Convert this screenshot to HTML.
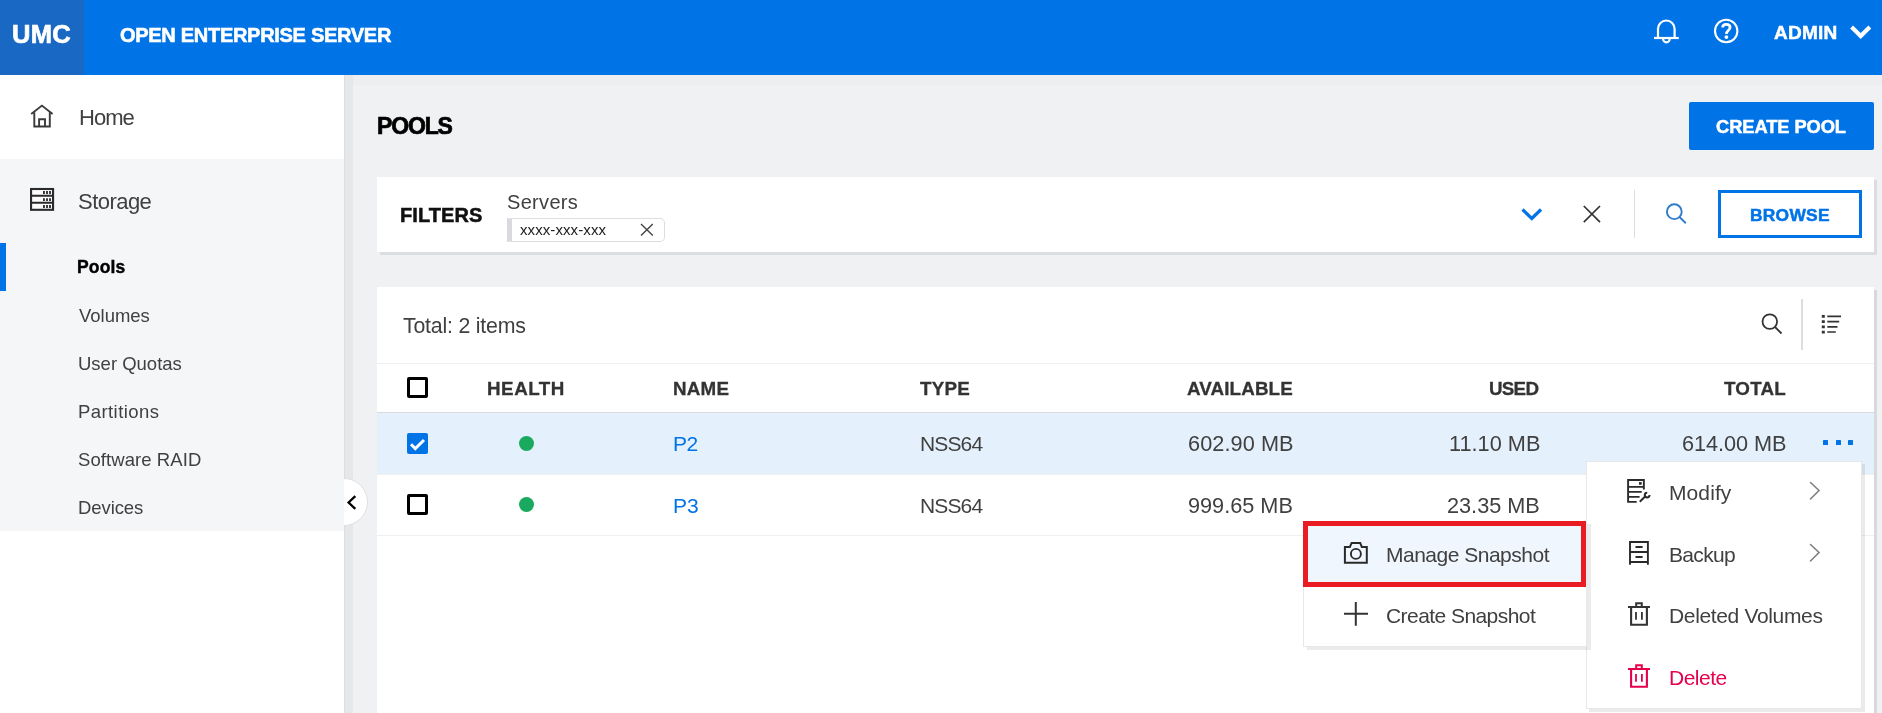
<!DOCTYPE html><html><head><meta charset="utf-8"><style>
html,body{margin:0;padding:0;width:1882px;height:713px;overflow:hidden;background:#f0f1f3;font-family:"Liberation Sans",sans-serif;}
.t{position:absolute;white-space:nowrap;line-height:1;will-change:transform;}
.r{position:absolute;box-sizing:border-box;}
svg{position:absolute;overflow:visible;}
</style></head><body>
<div class="r" style="left:344px;top:75px;width:1538px;height:638px;background:#f0f1f3"></div>
<div class="r" style="left:344px;top:75px;width:1538px;height:10px;background:#edeef0"></div>
<div class="r" style="left:344px;top:75px;width:9px;height:638px;background:#e6e7e9"></div>
<div class="r" style="left:344px;top:75px;width:1px;height:638px;background:#dcdddf"></div>
<div class="r" style="left:0px;top:0px;width:1882px;height:75px;background:#0073e7"></div>
<div class="r" style="left:0px;top:0px;width:84px;height:75px;background:#1968c4"></div>
<div class="t" style="left:12.00px;top:21.51px;font-size:25.5px;font-weight:bold;color:#fff;letter-spacing:0.295px;-webkit-text-stroke:0.7px #fff;">UMC</div>
<div class="t" style="left:119.80px;top:25.07px;font-size:20px;font-weight:bold;color:#fff;letter-spacing:-0.293px;-webkit-text-stroke:0.6px #fff;">OPEN ENTERPRISE SERVER</div>
<div class="t" style="left:1774.22px;top:22.92px;font-size:19px;font-weight:bold;color:#fff;letter-spacing:0.246px;-webkit-text-stroke:0.5px #fff;">ADMIN</div>
<svg style="left:1848px;top:24px" width="26" height="16" viewBox="0 0 26 16"><path d="M3.6 3 L12.7 12 L21.8 3" fill="none" stroke="#fff" stroke-width="4.1"/></svg>
<svg style="left:1650px;top:15px" width="32" height="32" viewBox="0 0 32 32"><path d="M8 23 V13.8 A8.2 8.2 0 0 1 24.6 13.8 V23" fill="none" stroke="#fff" stroke-width="2.2"/><path d="M4 23 H28.8" fill="none" stroke="#fff" stroke-width="2.2"/><path d="M13.1 24 A3.2 3.2 0 0 0 19.7 24" fill="none" stroke="#fff" stroke-width="2.2"/></svg>
<svg style="left:1712px;top:17px" width="28" height="28" viewBox="0 0 28 28"><circle cx="14.2" cy="14" r="11.2" fill="none" stroke="#fff" stroke-width="2.1"/><path d="M10.6 10.5 C10.6 6.3 18.1 6.3 18.1 10.5 C18.1 13.2 14.4 13.4 14.4 17" fill="none" stroke="#fff" stroke-width="2.7"/><circle cx="14.4" cy="20.1" r="1.9" fill="#fff"/></svg>
<div class="r" style="left:0px;top:75px;width:344px;height:84px;background:#fff"></div>
<div class="r" style="left:0px;top:159px;width:344px;height:372px;background:#f5f6f8"></div>
<div class="r" style="left:0px;top:531px;width:344px;height:182px;background:#fff"></div>
<div class="r" style="left:0px;top:243px;width:6px;height:48px;background:#0073e7"></div>
<div class="t" style="left:79.04px;top:106.88px;font-size:22px;color:#404040;letter-spacing:-0.979px;">Home</div>
<div class="t" style="left:77.71px;top:191.08px;font-size:22px;color:#404040;letter-spacing:-0.535px;">Storage</div>
<div class="t" style="left:77.45px;top:259.39px;font-size:17.5px;font-weight:bold;color:#000;letter-spacing:0.151px;-webkit-text-stroke:0.4px #000;">Pools</div>
<div class="t" style="left:78.51px;top:306.74px;font-size:18.5px;color:#404040;letter-spacing:-0.018px;">Volumes</div>
<div class="t" style="left:77.71px;top:354.74px;font-size:18.5px;color:#404040;letter-spacing:-0.002px;">User Quotas</div>
<div class="t" style="left:77.71px;top:402.74px;font-size:18.5px;color:#404040;letter-spacing:0.422px;">Partitions</div>
<div class="t" style="left:77.71px;top:450.74px;font-size:18.5px;color:#404040;letter-spacing:0.075px;">Software RAID</div>
<div class="t" style="left:77.71px;top:498.74px;font-size:18.5px;color:#404040;letter-spacing:-0.087px;">Devices</div>
<svg style="left:28px;top:102px" width="28" height="28" viewBox="0 0 28 28"><path d="M3.2 12 L13.9 3.6 L24.6 12" fill="none" stroke="#3a3a3a" stroke-width="1.9"/><path d="M6.3 10.2 V24.5 H21.8 V10.2" fill="none" stroke="#3a3a3a" stroke-width="1.9"/><path d="M11.1 24.5 V17.2 H17 V24.5" fill="none" stroke="#3a3a3a" stroke-width="1.9"/></svg>
<svg style="left:28px;top:186px" width="28" height="28" viewBox="0 0 28 28"><rect x="3.06" y="3" width="22" height="20.8" fill="#fcfcfd" stroke="#2a2a2a" stroke-width="2.1"/><path d="M3 9.7 H25 M3 16.7 H25" stroke="#2a2a2a" stroke-width="2.1"/><path d="M15.95 5.1 V7.9 M19 5.1 V7.9 M22 5.1 V7.9 M15.95 12.2 V14.9 M19 12.2 V14.9 M22 12.2 V14.9 M15.95 19.1 V22 M19 19.1 V22 M22 19.1 V22" stroke="#333" stroke-width="1.9"/></svg>
<div class="r" style="left:319.5px;top:477.5px;width:48.5px;height:48.5px;border-radius:50%;background:#fff;border:1px solid #dedfe2;clip-path:inset(0 0 0 24.5px);"></div>
<svg style="left:344px;top:492px" width="16" height="20" viewBox="0 0 16 20"><path d="M11.3 4.2 L4.6 10.5 L11.3 16.8" fill="none" stroke="#000" stroke-width="2.3"/></svg>
<div class="t" style="left:376.55px;top:114.53px;font-size:23px;font-weight:bold;color:#000;letter-spacing:-1.154px;-webkit-text-stroke:0.7px #000;">POOLS</div>
<div class="r" style="left:1689px;top:102px;width:185px;height:48px;background:#0073e7;border-radius:2px"></div>
<div class="t" style="left:1715.80px;top:117.61px;font-size:18.3px;font-weight:bold;color:#fff;letter-spacing:-0.067px;-webkit-text-stroke:0.5px #fff;">CREATE POOL</div>
<div class="r" style="left:380px;top:180px;width:1497px;height:75px;background:#dcdde0"></div>
<div class="r" style="left:377px;top:177px;width:1497px;height:75px;background:#fff"></div>
<div class="t" style="left:400.46px;top:205.17px;font-size:20px;font-weight:bold;color:#111;letter-spacing:0.067px;-webkit-text-stroke:0.5px #111;">FILTERS</div>
<div class="t" style="left:507.00px;top:191.67px;font-size:20px;color:#404040;letter-spacing:0.315px;">Servers</div>
<div class="r" style="left:507px;top:218px;width:158px;height:24px;background:#fff;border:1px solid #dcdde0;border-left:5px solid #d9dadd;border-radius:0 5px 5px 0"></div>
<div class="t" style="left:520.30px;top:222.20px;font-size:15px;color:#222;letter-spacing:0.089px;">xxxx-xxx-xxx</div>
<svg style="left:638px;top:221px" width="18" height="18" viewBox="0 0 18 18"><path d="M3 3 L14.8 14.5 M14.8 3 L3 14.5" stroke="#444" stroke-width="1.4" fill="none"/></svg>
<svg style="left:1518px;top:204px" width="28" height="20" viewBox="0 0 28 20"><path d="M4.5 5.5 L13.8 14.5 L23 5.5" fill="none" stroke="#0073e7" stroke-width="3.2"/></svg>
<svg style="left:1580px;top:202px" width="24" height="24" viewBox="0 0 24 24"><path d="M3.8 4 L20 20.2 M20 4 L3.8 20.2" stroke="#333" stroke-width="1.7" fill="none"/></svg>
<div class="r" style="left:1634px;top:190px;width:1px;height:48px;background:#dcdde0"></div>
<svg style="left:1662px;top:200px" width="30" height="30" viewBox="0 0 30 30"><circle cx="12.3" cy="11.7" r="7.4" fill="none" stroke="#2f7dc8" stroke-width="1.9"/><path d="M17.5 17 L23.8 23.2" stroke="#2f7dc8" stroke-width="1.9"/></svg>
<div class="r" style="left:1718px;top:190px;width:144px;height:48px;background:#fff;border:3px solid #0073e7"></div>
<div class="t" style="left:1749.54px;top:206.57px;font-size:17.4px;font-weight:bold;color:#0073e7;letter-spacing:0.244px;-webkit-text-stroke:0.5px #0073e7;">BROWSE</div>
<div class="r" style="left:380px;top:290px;width:1497px;height:430px;background:#d8d9dc"></div>
<div class="r" style="left:377px;top:287px;width:1497px;height:430px;background:#fff"></div>
<div class="t" style="left:402.50px;top:315.77px;font-size:21.3px;color:#404040;letter-spacing:-0.2px;">Total: 2 items</div>
<svg style="left:1755px;top:308px" width="32" height="32" viewBox="0 0 32 32"><circle cx="14.8" cy="13.6" r="7.3" fill="none" stroke="#333" stroke-width="1.8"/><path d="M20 19 L26.5 25.5" stroke="#333" stroke-width="1.8"/></svg>
<div class="r" style="left:1801px;top:299px;width:2px;height:51px;background:#dcdde0"></div>
<svg style="left:1818px;top:310px" width="28" height="28" viewBox="0 0 28 28"><path d="M5.3 5 V7.8 M5.3 10.3 V13.1 M5.3 15.5 V18.3 M5.3 20.7 V23.5" stroke="#333" stroke-width="3"/><path d="M9.3 6.3 H23 M9.3 11.6 H21.2 M9.3 16.9 H19.5 M9.3 22 H17.8" stroke="#333" stroke-width="1.7"/></svg>
<div class="r" style="left:377px;top:363px;width:1497px;height:1px;background:#eeeff1"></div>
<div class="r" style="left:407px;top:377px;width:21px;height:21px;border:3px solid #000;border-radius:2px"></div>
<div class="t" style="left:487.49px;top:380.49px;font-size:18.8px;font-weight:bold;color:#333;letter-spacing:0.53px;-webkit-text-stroke:0.3px #333;">HEALTH</div>
<div class="t" style="left:672.58px;top:380.49px;font-size:18.8px;font-weight:bold;color:#333;letter-spacing:0.221px;-webkit-text-stroke:0.3px #333;">NAME</div>
<div class="t" style="left:920.38px;top:380.49px;font-size:18.8px;font-weight:bold;color:#333;letter-spacing:0.28px;-webkit-text-stroke:0.3px #333;">TYPE</div>
<div class="t" style="right:589.54px;top:380.49px;font-size:18.8px;font-weight:bold;color:#333;letter-spacing:0.131px;-webkit-text-stroke:0.3px #333;">AVAILABLE</div>
<div class="t" style="right:343.51px;top:380.49px;font-size:18.8px;font-weight:bold;color:#333;letter-spacing:-0.745px;-webkit-text-stroke:0.3px #333;">USED</div>
<div class="t" style="right:96.30px;top:380.49px;font-size:18.8px;font-weight:bold;color:#333;letter-spacing:0.2px;-webkit-text-stroke:0.3px #333;">TOTAL</div>
<div class="r" style="left:377px;top:412px;width:1497px;height:1px;background:#d9dadd"></div>
<div class="r" style="left:377px;top:413px;width:1497px;height:61px;background:#e4f0fc"></div>
<div class="r" style="left:377px;top:474px;width:1497px;height:1px;background:#efeff0"></div>
<div class="r" style="left:407px;top:433px;width:21px;height:21px;background:#0073e7;border-radius:2px"></div>
<svg style="left:407px;top:433px" width="21" height="21" viewBox="0 0 21 21"><path d="M4 11.2 L8.3 15.6 L17 7" fill="none" stroke="#fff" stroke-width="3"/></svg>
<div class="r" style="left:519px;top:436px;width:15px;height:15px;background:#19a95f;border-radius:50%"></div>
<div class="t" style="left:672.83px;top:432.92px;font-size:21px;color:#0073e7;letter-spacing:-0.41px;">P2</div>
<div class="t" style="left:920.46px;top:432.92px;font-size:21px;color:#404040;letter-spacing:-0.864px;">NSS64</div>
<div class="t" style="right:588.32px;top:432.73px;font-size:21.7px;color:#404040;letter-spacing:0.075px;">602.90 MB</div>
<div class="t" style="right:342.04px;top:432.73px;font-size:21.7px;color:#404040;letter-spacing:0.025px;">11.10 MB</div>
<div class="t" style="right:95.17px;top:432.73px;font-size:21.7px;color:#404040;letter-spacing:-0.055px;">614.00 MB</div>
<div class="r" style="left:1823.0px;top:440px;width:5px;height:5px;background:#0073e7;border-radius:0.5px"></div>
<div class="r" style="left:1835.5px;top:440px;width:5px;height:5px;background:#0073e7;border-radius:0.5px"></div>
<div class="r" style="left:1848.0px;top:440px;width:5px;height:5px;background:#0073e7;border-radius:0.5px"></div>
<div class="r" style="left:407px;top:494px;width:21px;height:21px;border:3px solid #000;border-radius:2px"></div>
<div class="r" style="left:519px;top:497px;width:15px;height:15px;background:#19a95f;border-radius:50%"></div>
<div class="t" style="left:673.00px;top:494.92px;font-size:21px;color:#0073e7;">P3</div>
<div class="t" style="left:920.46px;top:494.92px;font-size:21px;color:#404040;letter-spacing:-0.864px;">NSS64</div>
<div class="t" style="right:589.00px;top:494.63px;font-size:21.7px;color:#404040;">999.65 MB</div>
<div class="t" style="right:342.00px;top:494.63px;font-size:21.7px;color:#404040;">23.35 MB</div>
<div class="r" style="left:377px;top:535px;width:1497px;height:1px;background:#eeeff1"></div>
<div class="r" style="left:1586px;top:461px;width:276px;height:248px;background:#fff;border:1px solid #e8e8e8;box-shadow:3px 3px 0 rgba(0,0,0,0.08)"></div>
<div class="t" style="left:1669.31px;top:481.92px;font-size:21px;color:#404040;letter-spacing:0.092px;">Modify</div>
<div class="t" style="left:1669.31px;top:544.22px;font-size:21px;color:#404040;letter-spacing:-0.67px;">Backup</div>
<div class="t" style="left:1669.31px;top:605.02px;font-size:21px;color:#404040;letter-spacing:-0.348px;">Deleted Volumes</div>
<div class="t" style="left:1669.31px;top:667.02px;font-size:21px;color:#e5004c;letter-spacing:-0.49px;">Delete</div>
<svg style="left:1806px;top:481px" width="18" height="20" viewBox="0 0 18 20"><path d="M4.5 1.5 L13 9.5 L4.5 18" fill="none" stroke="#808080" stroke-width="1.6" stroke-linecap="round"/></svg>
<svg style="left:1806px;top:543px" width="18" height="20" viewBox="0 0 18 20"><path d="M4.5 1.5 L13 9.5 L4.5 18" fill="none" stroke="#808080" stroke-width="1.6" stroke-linecap="round"/></svg>
<svg style="left:1624px;top:477px" width="30" height="30" viewBox="0 0 30 30"><path d="M19.85 12.5 V2.95 H4.1 V24.9 H12.7" fill="none" stroke="#2a2a2a" stroke-width="1.9"/><path d="M4.1 9.9 H19.85 M4.1 14.9 H17.7 M4.1 19.9 H15.6" stroke="#2a2a2a" stroke-width="1.9"/><rect x="15" y="5.1" width="2.7" height="2.6" fill="#2a2a2a"/><path d="M15.8 24.7 L21.6 19" stroke="#2a2a2a" stroke-width="1.9"/><path d="M23.2 15.7 A2.4 2.4 0 1 0 25.6 18.1" fill="none" stroke="#2a2a2a" stroke-width="2"/></svg>
<svg style="left:1624px;top:539px" width="30" height="30" viewBox="0 0 30 30"><path d="M6 25.85 V3 H23.9 V25.85" fill="none" stroke="#2a2a2a" stroke-width="1.9"/><path d="M6 13 H23.9 M6 23 H23.9" stroke="#2a2a2a" stroke-width="1.9"/><path d="M12.2 8 H17.9 M12.2 18 H17.9" stroke="#2a2a2a" stroke-width="1.9" stroke-linecap="round"/></svg>
<svg style="left:1624px;top:601px" width="30" height="30" viewBox="0 0 30 30"><path d="M4 6 H25.95" stroke="#333" stroke-width="2"/><path d="M12.2 6 V2.2 H17.8 V6" fill="none" stroke="#333" stroke-width="2"/><path d="M7.1 6 V23.7 H22.9 V6" fill="none" stroke="#333" stroke-width="2.1"/><path d="M12 11.1 V18.8 M17.9 11.1 V18.8" stroke="#333" stroke-width="1.8"/></svg>
<svg style="left:1624px;top:663px" width="30" height="30" viewBox="0 0 30 30"><path d="M4 6 H25.95" stroke="#e5004c" stroke-width="2"/><path d="M12.2 6 V2.2 H17.8 V6" fill="none" stroke="#e5004c" stroke-width="2"/><path d="M7.1 6 V23.7 H22.9 V6" fill="none" stroke="#e5004c" stroke-width="2.1"/><path d="M12 11.1 V18.8 M17.9 11.1 V18.8" stroke="#e5004c" stroke-width="1.8"/></svg>
<div class="r" style="left:1303px;top:521px;width:284px;height:126px;background:#fff;border:1px solid #e8e8e8;box-shadow:4px 3px 0 rgba(0,0,0,0.08)"></div>
<div class="r" style="left:1303px;top:521px;width:283px;height:66px;background:#f0f6fe;border:5px solid #e91c24"></div>
<svg style="left:1340px;top:538px" width="32" height="30" viewBox="0 0 32 30"><path d="M4.9 8.9 H9.9 L11.6 4.9 H20.2 L21.8 8.9 H26.8 V24.7 H4.9 Z" fill="none" stroke="#2a2a2a" stroke-width="2"/><circle cx="15.9" cy="15.9" r="5" fill="none" stroke="#2a2a2a" stroke-width="1.9"/></svg>
<div class="t" style="left:1386.19px;top:544.22px;font-size:21px;color:#404040;letter-spacing:-0.5px;">Manage Snapshot</div>
<svg style="left:1340px;top:599px" width="32" height="30" viewBox="0 0 32 30"><path d="M15.8 3 V26.7 M4 14.8 H28" stroke="#333" stroke-width="2"/></svg>
<div class="t" style="left:1386.19px;top:605.02px;font-size:21px;color:#404040;letter-spacing:-0.561px;">Create Snapshot</div>
</body></html>
